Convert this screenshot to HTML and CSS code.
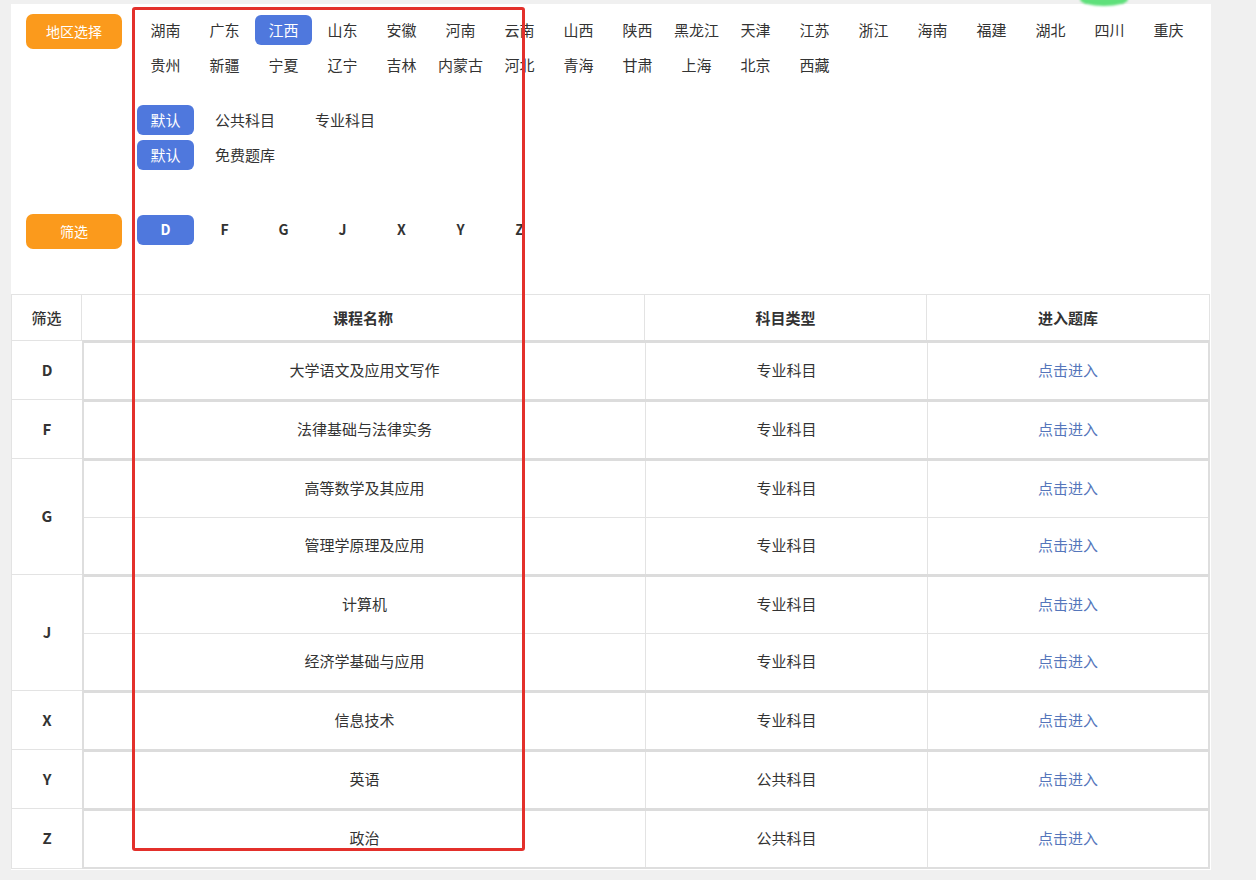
FILE: index.html
```html
<!DOCTYPE html>
<html lang="zh-CN">
<head>
<meta charset="utf-8">
<title>题库</title>
<link rel="stylesheet" href="styles.css">
</head>
<body>
<div class="page">
  <div class="filters">
    <div class="frow region">
      <div class="label">地区选择</div>
      <div class="list">
        <span class="item">湖南</span><span class="item">广东</span><span class="item active">江西</span><span class="item">山东</span><span class="item">安徽</span><span class="item">河南</span><span class="item">云南</span><span class="item">山西</span><span class="item">陕西</span><span class="item">黑龙江</span><span class="item">天津</span><span class="item">江苏</span><span class="item">浙江</span><span class="item">海南</span><span class="item">福建</span><span class="item">湖北</span><span class="item">四川</span><span class="item">重庆</span>
        <span class="item">贵州</span><span class="item">新疆</span><span class="item">宁夏</span><span class="item">辽宁</span><span class="item">吉林</span><span class="item">内蒙古</span><span class="item">河北</span><span class="item">青海</span><span class="item">甘肃</span><span class="item">上海</span><span class="item">北京</span><span class="item">西藏</span>
      </div>
    </div>
    <div class="subjects">
      <div class="srow"><span class="item active">默认</span><span class="item wide">公共科目</span><span class="item wide">专业科目</span></div>
      <div class="srow"><span class="item active">默认</span><span class="item wide">免费题库</span></div>
    </div>
    <div class="frow letters">
      <div class="label">筛选</div>
      <div class="list">
        <span class="item active bold">D</span><span class="item bold">F</span><span class="item bold">G</span><span class="item bold">J</span><span class="item bold">X</span><span class="item bold">Y</span><span class="item bold">Z</span>
      </div>
    </div>
  </div>

  <div class="tbl">
    <div class="thead">
      <div class="hcell plain">筛选</div>
      <div class="hcell">课程名称</div>
      <div class="hcell">科目类型</div>
      <div class="hcell">进入题库</div>
    </div>

    <div class="group">
      <div class="letter">D</div>
      <div class="rows">
        <div class="row"><div class="cell">大学语文及应用文写作</div><div class="cell">专业科目</div><div class="cell link">点击进入</div></div>
      </div>
    </div>
    <div class="group">
      <div class="letter">F</div>
      <div class="rows">
        <div class="row"><div class="cell">法律基础与法律实务</div><div class="cell">专业科目</div><div class="cell link">点击进入</div></div>
      </div>
    </div>
    <div class="group">
      <div class="letter">G</div>
      <div class="rows">
        <div class="row"><div class="cell">高等数学及其应用</div><div class="cell">专业科目</div><div class="cell link">点击进入</div></div>
        <div class="row"><div class="cell">管理学原理及应用</div><div class="cell">专业科目</div><div class="cell link">点击进入</div></div>
      </div>
    </div>
    <div class="group">
      <div class="letter">J</div>
      <div class="rows">
        <div class="row"><div class="cell">计算机</div><div class="cell">专业科目</div><div class="cell link">点击进入</div></div>
        <div class="row"><div class="cell">经济学基础与应用</div><div class="cell">专业科目</div><div class="cell link">点击进入</div></div>
      </div>
    </div>
    <div class="group">
      <div class="letter">X</div>
      <div class="rows">
        <div class="row"><div class="cell">信息技术</div><div class="cell">专业科目</div><div class="cell link">点击进入</div></div>
      </div>
    </div>
    <div class="group">
      <div class="letter">Y</div>
      <div class="rows">
        <div class="row"><div class="cell">英语</div><div class="cell">公共科目</div><div class="cell link">点击进入</div></div>
      </div>
    </div>
    <div class="group last">
      <div class="letter">Z</div>
      <div class="rows">
        <div class="row"><div class="cell">政治</div><div class="cell">公共科目</div><div class="cell link">点击进入</div></div>
      </div>
    </div>
  </div>
</div>

<div class="blob"></div>
<div class="redbox"></div>
</body>
</html>
```

FILE: styles.css
```css
html, body {
  margin: 0;
  padding: 0;
  background: #f0f0f0;
}
body {
  font-family: "Noto Sans CJK SC", "Microsoft YaHei", sans-serif;
  font-size: 15px;
  color: #333;
  position: relative;
  height: 880px;
  overflow: hidden;
}
.page {
  margin: 4px 0 0 11px;
  width: 1200px;
  background: #fff;
  padding-bottom: 1px;
}
.filters {
  padding: 10px 0 0 15px;
}
.frow {
  display: flex;
  align-items: flex-start;
}
.label {
  width: 96px;
  height: 35px;
  line-height: 35px;
  flex: none;
  margin-right: 15px;
  background: #fb9a1c;
  color: #fff;
  border-radius: 7px;
  text-align: center;
  font-size: 14px;
}
.list {
  display: flex;
  flex-wrap: wrap;
  width: 1070px;
  padding-top: 1px;
}
.item {
  display: inline-block;
  width: 57px;
  height: 30px;
  line-height: 29px;
  margin: 0 2px 5px 0;
  text-align: center;
  border-radius: 6px;
  white-space: nowrap;
}
.item.active {
  background: #4f78dd;
  color: #fff;
}
.item.bold {
  font-weight: bold;
  font-size: 14px;
}
.subjects {
  margin: 20px 0 0 111px;
}
.srow {
  display: flex;
}
.srow .item.wide {
  width: 100px;
  margin-right: 0;
}
.srow .item.active {
  margin-right: 1px;
}
.letters {
  margin-top: 39px;
}

/* table */
.tbl {
  margin-top: 44px;
  width: 1199px;
  box-sizing: border-box;
  border-left: 1px solid #e3e3e3;
  border-top: 1px solid #e3e3e3;
}
.thead {
  display: grid;
  grid-template-columns: 70px 563px 282px 1fr;
  height: 45px;
}
.hcell {
  display: flex;
  align-items: center;
  justify-content: center;
  font-weight: bold;
  border-right: 1px solid #e3e3e3;
}
.hcell.plain {
  font-weight: 500;
}
.group {
  display: flex;
}
.letter {
  width: 70px;
  flex: none;
  border-top: 1px solid #e3e3e3;
  display: flex;
  align-items: center;
  justify-content: center;
  font-weight: bold;
  padding-bottom: 2px;
  box-sizing: border-box;
}
.rows {
  flex: 1;
  border-top: 3px solid #dcdcdc;
  border-left: 2px solid #dedede;
  border-right: 2px solid #dedede;
}
.group.last .rows {
  border-bottom: 2px solid #dedede;
}
.group.last .letter {
  border-bottom: 1px solid #e3e3e3;
}
.row {
  display: grid;
  grid-template-columns: 561px 282px 1fr;
  height: 56px;
}
.row + .row {
  border-top: 1px solid #e3e3e3;
}
.cell {
  display: flex;
  align-items: center;
  justify-content: center;
  padding-bottom: 4px;
}
.cell + .cell {
  border-left: 1px solid #e3e3e3;
}
.cell.link {
  color: #5576bb;
}

/* overlays */
.redbox {
  position: absolute;
  left: 132px;
  top: 7px;
  width: 387px;
  height: 838px;
  border: 3px solid #e3302b;
  border-radius: 3px;
  pointer-events: none;
}
.blob {
  position: absolute;
  left: 1080px;
  top: -7px;
  width: 48px;
  height: 13px;
  border-radius: 50%;
  background: #5fe07b;
  filter: blur(1px);
}
```
